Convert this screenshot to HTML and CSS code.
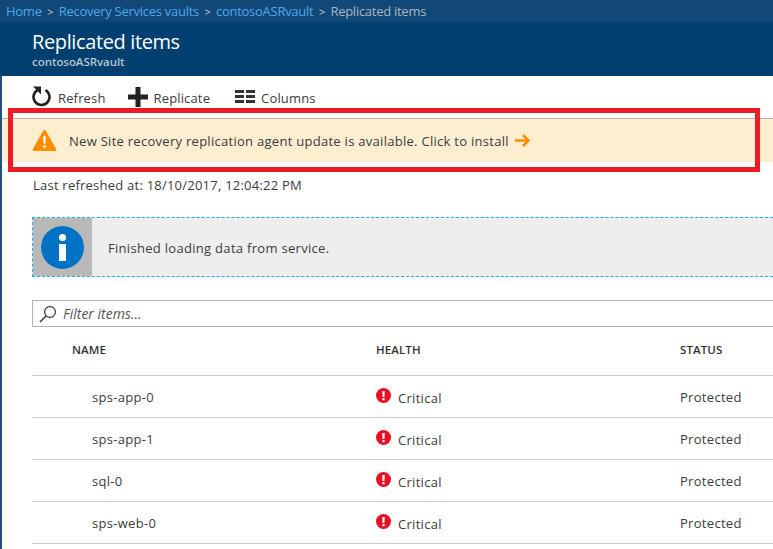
FILE: index.html
```html
<!DOCTYPE html>
<html lang="en">
<head>
    <meta charset="UTF-8">
    <meta name="viewport" content="width=device-width, initial-scale=1.0">
    <title>Replicated items</title>
    <link rel="stylesheet" href="styles.css">
</head>
<body>
    <nav class="crumbs">
        <a>Home</a><span class="sep">&gt;</span>
        <a>Recovery Services vaults</a><span class="sep">&gt;</span>
        <a>contosoASRvault</a><span class="sep">&gt;</span>
        <span class="current">Replicated items</span>
    </nav>

    <header class="blade-head">
        <h1>Replicated items</h1>
        <p>contosoASRvault</p>
    </header>

    <main class="blade">
        <div class="toolbar">
            <div class="tool tool-refresh">
                <svg width="20" height="21" viewBox="0 0 20 21"><path d="M5.5 4.07 A8 8 0 1 0 13.5 4.07" fill="none" stroke="#222" stroke-width="2.6"/><path d="M1 .5 H9 V8.5 Z" fill="#222"/></svg>
                <span>Refresh</span>
            </div>
            <div class="tool">
                <svg width="20" height="20" viewBox="0 0 20 20"><path d="M7.5 0 H12.5 V7.5 H20 V12.5 H12.5 V20 H7.5 V12.5 H0 V7.5 H7.5 Z" fill="#222"/></svg>
                <span>Replicate</span>
            </div>
            <div class="tool">
                <svg width="20" height="13" viewBox="0 0 20 13"><path d="M0 0 H9 V3 H0 Z M11 0 H20 V3 H11 Z M0 5 H9 V8 H0 Z M11 5 H20 V8 H11 Z M0 10 H9 V13 H0 Z M11 10 H20 V13 H11 Z" fill="#333"/></svg>
                <span>Columns</span>
            </div>
        </div>

        <div class="update-banner">
            <svg width="25" height="21" viewBox="0 0 25 22"><path d="M12.5 0 C13.2 0 13.7 .4 14 1 L24.7 20 C25.2 21 24.6 22 23.5 22 H1.5 C.4 22 -.2 21 .3 20 L11 1 C11.3 .4 11.8 0 12.5 0 Z" fill="#ff8c00"/><path d="M11.2 6 H13.8 L13.4 14.5 H11.6 Z M11.2 16 H13.8 V18.6 H11.2 Z" fill="#fff"/></svg>
            <span>New Site recovery replication agent update is available. Click to install</span>
            <svg class="go" width="15" height="13" viewBox="0 0 15 13"><path d="M0 6.5 H13 M8 1 L13.5 6.5 L8 12" fill="none" stroke="#ff8c00" stroke-width="2.6"/></svg>
            <div class="callout"></div>
        </div>

        <p class="refreshed">Last refreshed at: 18/10/2017, 12:04:22 PM</p>

        <div class="info-box">
            <div class="info-icon">
                <svg width="43" height="43" viewBox="0 0 43 43"><circle cx="21.5" cy="21.5" r="21.5" fill="#0072c6"/><circle cx="21.5" cy="11.5" r="3.6" fill="#fff"/><rect x="18" y="18" width="7" height="17" fill="#fff"/></svg>
            </div>
            <span>Finished loading data from service.</span>
        </div>

        <div class="filter">
            <svg width="18" height="18" viewBox="0 0 18 18"><circle cx="11" cy="7" r="5.4" fill="none" stroke="#333" stroke-width="1.2"/><path d="M7 11 L1 17" stroke="#333" stroke-width="1.4"/></svg>
            <span>Filter items...</span>
        </div>

        <div class="grid">
            <div class="row head">
                <div class="name">NAME</div>
                <div>HEALTH</div>
                <div>STATUS</div>
            </div>
            <div class="row">
                <div class="name">sps-app-0</div>
                <div class="health"><svg class="crit" width="15" height="15" viewBox="0 0 15 15"><circle cx="7.5" cy="7.5" r="7.5" fill="#e81123"/><path d="M6.2 3 H8.8 L8.4 9 H6.6 Z M6.4 10 H8.6 V12.2 H6.4 Z" fill="#fff"/></svg><span>Critical</span></div>
                <div>Protected</div>
            </div>
            <div class="row">
                <div class="name">sps-app-1</div>
                <div class="health"><svg class="crit" width="15" height="15" viewBox="0 0 15 15"><circle cx="7.5" cy="7.5" r="7.5" fill="#e81123"/><path d="M6.2 3 H8.8 L8.4 9 H6.6 Z M6.4 10 H8.6 V12.2 H6.4 Z" fill="#fff"/></svg><span>Critical</span></div>
                <div>Protected</div>
            </div>
            <div class="row">
                <div class="name">sql-0</div>
                <div class="health"><svg class="crit" width="15" height="15" viewBox="0 0 15 15"><circle cx="7.5" cy="7.5" r="7.5" fill="#e81123"/><path d="M6.2 3 H8.8 L8.4 9 H6.6 Z M6.4 10 H8.6 V12.2 H6.4 Z" fill="#fff"/></svg><span>Critical</span></div>
                <div>Protected</div>
            </div>
            <div class="row">
                <div class="name">sps-web-0</div>
                <div class="health"><svg class="crit" width="15" height="15" viewBox="0 0 15 15"><circle cx="7.5" cy="7.5" r="7.5" fill="#e81123"/><path d="M6.2 3 H8.8 L8.4 9 H6.6 Z M6.4 10 H8.6 V12.2 H6.4 Z" fill="#fff"/></svg><span>Critical</span></div>
                <div>Protected</div>
            </div>
        </div>
    </main>
</body>
</html>
```

FILE: styles.css
```css
html, body { margin: 0; padding: 0; height: 549px; overflow: hidden; }
body { font-family: "Open Sans", "Noto Sans", sans-serif; font-size: 13px; color: #3c3c3c; background: #fff; }
h1, p { margin: 0; }

.crumbs { height: 22px; display: flex; align-items: center; padding-left: 6px; background: #114877; font-size: 13px; letter-spacing: -0.27px; white-space: nowrap; }
.crumbs a { color: #4fa8ec; }
.crumbs .sep { width: 17px; text-align: center; color: #c8d2da; font-size: 11px; }
.crumbs .current { color: #a9b6c1; }

.blade-head { height: 54px; box-sizing: border-box; padding: 6px 0 0 32px; background: #003f6f; color: #fff; }
.blade-head h1 { font-size: 20px; font-weight: 400; line-height: 27px; letter-spacing: -0.38px; }
.blade-head p { font-size: 11.5px; font-weight: 600; line-height: 13px; color: #b5c5d2; letter-spacing: -0.05px; }

.blade { border-left: 2px solid #1f5280; height: 473px; box-sizing: border-box; }

.toolbar { height: 43px; box-sizing: border-box; padding: 0 0 1px 30px; display: flex; align-items: center; border-bottom: 1px solid #b4b4b4; }
.tool { display: flex; align-items: center; gap: 6px; letter-spacing: 0.15px; margin-right: 25px; }
.tool span { padding-top: 2px; }
.tool-refresh { margin-right: 22px; }

.update-banner { position: relative; height: 43px; display: flex; align-items: center; padding-left: 30px; background: #fdeed0; color: #3c3c3c; letter-spacing: 0.28px; }
.update-banner span { margin-left: 12px; }
.update-banner .go { margin-left: 6px; }
.callout { position: absolute; left: 6px; top: -11px; width: 742px; height: 54px; border: 5px solid #ed1c24; }

.refreshed { margin: 15px 0 0 31px; font-size: 13px; line-height: 17px; letter-spacing: 0.23px; }

.info-box { margin: 23px -20px 0 30px; height: 60px; box-sizing: border-box; display: flex; align-items: center; border: 1px dashed #1ab2e8; background: #eeeeee; letter-spacing: 0.3px; }
.info-box span { padding-top: 2px; }
.info-icon { width: 59px; height: 58px; background: #b9b9b9; display: flex; align-items: center; justify-content: center; margin-right: 16px; flex: none; }

.filter { margin: 23px -20px 0 30px; height: 27px; box-sizing: border-box; display: flex; align-items: center; gap: 6px; padding-left: 6px; border: 1px solid #b5b5b5; font-size: 14px; font-style: italic; color: #555; }

.grid { margin: 10px 0 0 30px; }
.row { display: grid; grid-template-columns: 344px 304px 1fr; height: 42px; align-items: center; border-bottom: 1px solid #ccc; box-sizing: border-box; padding-top: 1px; letter-spacing: 0.3px; }
.row .name { padding-left: 60px; }
.row.head { height: 39px; padding: 0 0 14px; font-size: 11.5px; font-weight: 600; color: #333; letter-spacing: 0.1px; }
.row.head .name { padding-left: 40px; }
.health { display: flex; align-items: center; gap: 7px; }
.health span { padding-top: 2px; }
.crit { margin-top: -3px; }
```
